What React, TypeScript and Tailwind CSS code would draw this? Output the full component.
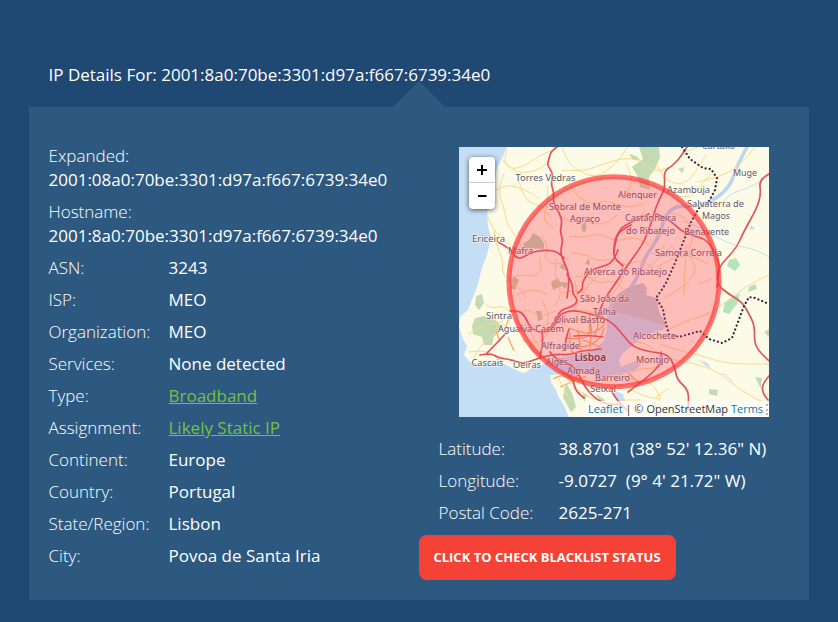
import React from "react";

const details: { label: string; value: string; link?: boolean; stacked?: boolean }[] = [
  { label: "Expanded:", value: "2001:08a0:70be:3301:d97a:f667:6739:34e0", stacked: true },
  { label: "Hostname:", value: "2001:8a0:70be:3301:d97a:f667:6739:34e0", stacked: true },
  { label: "ASN:", value: "3243" },
  { label: "ISP:", value: "MEO" },
  { label: "Organization:", value: "MEO" },
  { label: "Services:", value: "None detected" },
  { label: "Type:", value: "Broadband", link: true },
  { label: "Assignment:", value: "Likely Static IP", link: true },
  { label: "Continent:", value: "Europe" },
  { label: "Country:", value: "Portugal" },
  { label: "State/Region:", value: "Lisbon" },
  { label: "City:", value: "Povoa de Santa Iria" },
];

const coords = [
  { label: "Latitude:", value: "38.8701\u00a0 (38° 52' 12.36\" N)" },
  { label: "Longitude:", value: "-9.0727\u00a0 (9° 4' 21.72\" W)" },
  { label: "Postal Code:", value: "2625-271" },
];

// Town name, left edge, baseline and drawn width, in map pixels.
const towns: [string, number, number, number][] = [
  ["Torres Vedras", 56.5, 34, 60],
  ["Sobral de Monte", 90, 63, 72],
  ["Agraço", 111, 75, 30],
  ["Ericeira", 13, 95, 33],
  ["Mafra", 49, 107, 25],
  ["Cartaxo", 243, 2, 33],
  ["Muge", 274, 28.5, 24],
  ["Azambuja", 208, 46, 43],
  ["Alenquer", 159, 51, 39],
  ["Salvaterra de", 228, 60, 57],
  ["Magos", 243, 72, 28],
  ["Castanheira", 166, 74, 51],
  ["do Ribatejo", 167, 87, 49],
  ["Benavente", 225, 87.5, 45],
  ["Samora Correia", 196, 108.5, 67],
  ["Alverca do Ribatejo", 125, 128, 83],
  ["São João da", 121, 155, 49],
  ["Talha", 134, 167.5, 23],
  ["Sintra", 27, 171.5, 26],
  ["Agualva-Cacém", 39, 184.5, 66],
  ["Olival Basto", 95, 175.5, 51],
  ["Alfragide", 82, 201.5, 39],
  ["Cascais", 12.5, 219, 32],
  ["Oeiras", 54, 221, 28],
  ["Algés", 87, 217.5, 22],
  ["Almada", 108, 227, 33],
  ["Barreiro", 136, 234, 35],
  ["Seixal", 131, 245, 26],
  ["Alcochete", 174, 191.5, 43],
  ["Montijo", 177, 215.5, 33],
];

// Rounds the corners of "Mx y x y ..." polylines by curving between midpoints.
function smooth(d: string) {
  return d
    .split("M")
    .filter(Boolean)
    .map((part) => {
      const n = part.trim().split(/\s+/).map(Number);
      let out = `M${n[0]} ${n[1]}`;
      for (let i = 2; i < n.length - 2; i += 2) {
        out += `Q${n[i]} ${n[i + 1]} ${(n[i] + n[i + 2]) / 2} ${(n[i + 1] + n[i + 3]) / 2}`;
      }
      return out + `L${n[n.length - 2]} ${n[n.length - 1]}`;
    })
    .join("");
}

function RegionMap() {
  return (
    <svg width="310" height="270" viewBox="0 0 310 270" className="block" fontFamily='"Noto Sans", sans-serif'>
      <rect width="310" height="270" fill="#fcfbe7" />
      {/* Atlantic coast and river estuary */}
      <path
        fill="#c4def5"
        d="M0 0H48L44 9 38 21 35 40 31 55 28 66 29 79 32 90 28 108 23 121 18 140 12 155 9 163 1 170 0 180 4 192 8 199 5 208 11 215 21 217 31 215 42 215 51 220 61 225 66 226 74 220 82 218 93 213 106 210 119 208 134 203 145 194 148 181 148 168 150 157 159 147 170 140 184 136 188 141 187 148 197 151 200 165 208 179 204 183 183 189 176 197 164 206 160 213 162 220 176 214 182 218 175 224 162 227 151 229 139 230 126 225 116 230 105 227 91 228 92 235 97 243 99 249 104 257 110 270H0Z"
      />
      <path fill="#c3cfd6" d="M152 164 159 147 170 140 184 136 188 141 187 148 197 151 200 165 207 179 181 171Z" />
      <path fill="#c4def5" d="M154 243 164 247 166 255 158 254ZM243 213 248 216 252 221 247 219ZM292 78 296 82 291 83Z" />
      <g fill="none" stroke="#bdd6ee" strokeLinecap="round" strokeLinejoin="round">
        <path d={smooth("M288 0 279 17 276 26 270 40 258 51 247 56 232 60 216 59 206 69 201 87 194 99 185 112 181 126 172 140")} strokeWidth="3.5" />
        <path d={smooth("M310 29 289 42 274 45 265 54M224 74 241 80 258 91 277 99 296 102 310 110M240 214 248 218 251 222M263 226 268 228 273 235M183 125 194 117 204 106 214 99M188 104 201 111 218 107")} strokeWidth=".8" />
      </g>
      {/* Woods and parks */}
      <g fill="#c4dab2">
        <path d="M180 0 200 0 201 10 196 22 190 30 191 43 181 40 178 28 173 20 184 12ZM170 7 177 9 181 13 174 13Z" />
        <path d="M13 179 16 171 26 169 38 174 44 183 35 189 33 198 25 198 23 190 14 187ZM17 149 23 147 25 156 20 163 16 158Z" />
        <path d="M219 22 225 20 224 26ZM290 140 296 137 298 142 289 145ZM296 230 303 231 302 242ZM250 242 259 243 258 249 250 247ZM305 185 310 182 310 190Z" />
        <path d="M107 236 113 246 117 260 112 265 104 250ZM124 245 128 248 125 257ZM137 247 146 253 142 258Z" />
      </g>
      <path fill="#b5e3bc" d="M270 113 277 111 281 118 276 124 268 119ZM266 155 281 146 278 157 270 167 264 165Z" />
      <g fill="#bcd2ac">
        <path d="M64 97 71 92 74 86 81 90 85 96 85 102 66 101ZM122 79 127 74 127 84 124 85ZM126 117 130 111 131 118ZM92 135 99 131 103 139 94 143ZM54 129 60 133 56 143 51 141ZM100 120 105 115 107 124ZM77 164 82 164 84 172 79 174ZM101 135 109 136 106 142Z" />
      </g>
      {/* Minor roads */}
      <g fill="none" stroke="#fbd98a" strokeWidth="1" strokeLinejoin="round">
        <path d={smooth("M48 3 44 14 51 22 65 20 79 9 94 3M44 13 55 27 78 24 91 14M45 27 38 41 46 64 47 76 58 91 65 105M58 28 65 54 79 57 92 70M28 68 34 84 48 94 57 104M33 45 42 40 54 38 73 46 80 52M103 0 107 12 117 23 137 31 155 19 169 0")} />
        <path d={smooth("M103 23 125 25 145 16 176 9 196 26 210 20M35 83 37 98 44 112 43 128 59 139 67 150M20 151 31 163 43 158 54 167 68 162 81 170 97 164M46 135 56 127 75 130 83 123 80 110M83 89 91 101 84 111 96 119 110 111")} />
        <path d={smooth("M110 35 115 47 132 58 148 53 166 61 185 57M88 39 90 54 83 73 95 81M99 68 116 77 129 73 143 79 158 68M110 89 125 91 140 86 158 95 176 89 192 99M112 106 127 107 139 115 152 111 165 119 181 113 195 121")} />
        <path d={smooth("M167 16 176 33 164 51M196 15 205 34 225 38 237 25 247 8M205 45 229 54 242 38 252 27M211 66 226 67 235 89 228 106 239 123 226 139 205 151M239 35 261 30 280 19 296 0M223 6 239 0M197 121 222 104 249 117")} />
        <path d={smooth("M9 187 23 178 41 176 50 168M15 211 21 198 35 189 40 173 47 181M9 205 23 203 38 209M63 193 75 197 86 192 91 180M68 174 72 188 81 200M83 153 90 166 88 177M59 177 76 181 95 175 106 178")} />
        <path d={smooth("M227 97 225 148M206 184 231 172 246 169 269 154 287 139 310 128M201 197 216 203 241 208 267 217 310 217M207 211 240 217 263 227 282 244 310 258M170 195 181 194 196 202 206 213 199 221 177 222 169 229")} />
        <path d={smooth("M159 226 178 235 193 235 202 252M169 241 186 250 202 252M162 253 181 253M197 250 210 241M116 130 129 128 139 137 155 133 168 145M97 112 95 131 103 145 96 159M98 229 106 243 111 253M113 236 122 247 139 253")} />
        <path d={smooth("M102 146 117 142 133 150M109 166 122 161 137 167M116 134 119 149 116 164M122 149 130 137 139 129M58 148 71 141 88 147M152 149 160 139 167 124M195 107 206 99M240 137 253 132")} />
      </g>
      <g fill="none" stroke="#f5ad65" strokeWidth="1.3" strokeLinejoin="round">
        <path d={smooth("M110 181 125 187 137 185 147 177 143 168M106 191 126 193 132 183 129 172 120 173M113 200 127 201 142 191 145 181M119 184 122 205M130 166 133 180 131 201M124 193 141 200M111 186 110 203 117 207M138 166 140 178 135 190")} />
        <path d={smooth("M46 182 51 168M37 183 41 195M70 196 74 205 83 208M49 190 55 204M94 232 104 226 112 236 120 227M101 240 115 234 127 229M109 228 121 235M169 226 181 237")} />
      </g>
      {/* Motorways */}
      <g fill="none" stroke="#e0565c" strokeWidth="1.7" strokeLinejoin="round" strokeLinecap="round">
        <path d={smooth("M98 0 92 4 90 12 88 18 94 26 92 37 95 46 94 56 101 67 103 75 101 85 104 93 102 101 102 109 109 123 110 136 108 151M39 95 52 102 57 111 63 111 73 105 85 103 97 104 105 111")} />
        <path d={smooth("M108 127 114 137 113 146 119 153 115 159 101 163 97 174 88 184M159 103 154 116 141 120 130 124 123 136 124 142 119 146M155 105 155 94 160 85 172 78")} />
        <path d={smooth("M228 0 221 11 212 20 205 24 206 41 202 49 197 60 193 73 190 82 184 97 173 112 164 125 154 140 146 151 141 163 137 172M190 67 174 74 160 82 156 97 154 110 164 119M197 67 210 72 222 84 235 89 249 93 261 116 259 133 258 140")} />
        <path d={smooth("M310 27 300 32 302 47 298 61 285 84 277 102 262 117 258 128 259 138 268 146 283 155 289 165 296 179 295 199 310 214M310 229 304 236 303 245 309 253")} />
        <path d={smooth("M51 164 59 163 66 169 72 182 85 187 97 178 100 168 112 163 129 166 151 173 165 189 174 200 191 205 209 207 216 220 218 233 230 243 229 263")} />
        <path d={smooth("M21 208 32 206 39 211 55 213 64 217 80 211 96 207 110 208 122 204 142 202M28 206 39 195 47 186M81 210 84 196 83 183M91 205 97 213 114 218 121 230 127 242 138 253 150 258 162 257")} />
        <path d={smooth("M169 245 188 231 203 216 202 205M153 245 157 252 168 263M104 226 114 231 116 243 125 251M110 182 107 191 106 202M115 189 127 188 144 190")} />
      </g>
      {/* District boundary */}
      <path
        fill="none"
        stroke="#302940"
        strokeWidth="2.2"
        strokeLinecap="round"
        strokeDasharray="0.1 4"
        d="M223 0 231 12 244 21 252 22 258 31 256 43 249 56 240 61 232 75 225 93 216 116 207 136 202 144 197 151 204 162 206 173 210 187 220 190 241 184 250 192 263 196 273 191 279 175 285 159 290 150 296 151 310 157"
      />
      <g fontSize="8.7" fill="#5c5768" stroke="#fffdf2" strokeWidth="1.6" strokeOpacity=".6" paintOrder="stroke" strokeLinejoin="round">
        {towns.map(([name, x, y, width]) => (
          <text key={name} x={x} y={y} textLength={width} lengthAdjust="spacingAndGlyphs">
            {name}
          </text>
        ))}
        <text x="115.5" y="214" textLength="31.5" lengthAdjust="spacingAndGlyphs" fontSize="10" fontWeight="600" fill="#4b3444">
          Lisboa
        </text>
      </g>
      <circle cx="155" cy="134.8" r="105" fill="#ff3855" fillOpacity=".31" stroke="#ff3333" strokeWidth="5" strokeOpacity=".68" />
    </svg>
  );
}

export default function App() {
  return (
    <div className="h-[622px] w-[838px] overflow-hidden bg-[#1f4872] px-[29px] pt-[63px] font-['Open_Sans',sans-serif] text-[17px] leading-6 text-white">
      <h1 className="h-11 pl-[19.5px]">IP Details For: 2001:8a0:70be:3301:d97a:f667:6739:34e0</h1>
      <main className="relative flex h-[493px] w-[780px] bg-[#2d5980]">
        <div className="absolute -top-[26px] left-[364px] border-x-[26px] border-b-[26px] border-x-transparent border-b-[#2d5980]" />
        <dl className="w-[390px] pt-[33px] pl-[19.5px]">
          {details.map((item) => (
            <div key={item.label} className={item.stacked ? "py-1" : "flex py-1"}>
              <dt className="w-[120px] font-light">{item.label}</dt>
              <dd className="font-medium">
                {item.link ? (
                  <a className="font-normal text-[#77c043] underline">{item.value}</a>
                ) : (
                  item.value
                )}
              </dd>
            </div>
          ))}
        </dl>
        <section className="w-[390px] pt-10">
          <div className="relative ml-10 h-[270px] w-[310px] overflow-hidden">
            <RegionMap />
            <div className="absolute top-[10px] left-[10px] w-[26px] overflow-hidden rounded bg-white text-center shadow-[0_1px_5px_rgba(0,0,0,0.65)]">
              {["plus", "minus"].map((kind) => (
                <button key={kind} aria-label={kind} className="flex h-[26px] w-full justify-center border-b border-[#ccc] pt-2 last:border-b-0">
                  <svg width="10" height="10" viewBox="0 0 10 10" stroke="#000" strokeWidth="2">
                    <path d={kind === "plus" ? "M0 5H10M5 0V10" : "M1 5H9.5"} />
                  </svg>
                </button>
              ))}
            </div>
            <div className="absolute right-0 bottom-0 flex h-4 w-[186px] items-center bg-white/70 pl-[5px] text-[11px] leading-4 whitespace-pre text-[#333]">
              <span className="text-[#0078a8]">Leaflet</span> | © OpenStreetMap <span className="text-[#0078a8]">Terms</span>
              <span className="ml-[3px] h-[11px] border-l-2 border-dotted border-[#b5b5bb]" />
            </div>
          </div>
          <dl className="pt-4 pl-[19.5px]">
            {coords.map((item) => (
              <div key={item.label} className="flex py-1">
                <dt className="w-[120px] font-light">{item.label}</dt>
                <dd className="font-medium whitespace-nowrap">{item.value}</dd>
              </div>
            ))}
          </dl>
          <button className="mt-[6px] h-[45px] w-[257px] rounded-lg bg-[#f44336] pr-px pb-[2px] text-[13px] font-bold">CLICK TO CHECK BLACKLIST STATUS</button>
        </section>
      </main>
    </div>
  );
}
